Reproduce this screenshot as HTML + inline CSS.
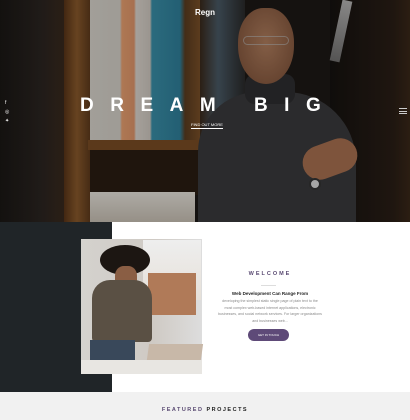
<!DOCTYPE html>
<html><head><style>
*{margin:0;padding:0;box-sizing:border-box}
body{width:410px;height:420px;overflow:hidden;font-family:"Liberation Sans",sans-serif;background:#fff;position:relative}
.a{position:absolute}
</style></head><body>
<div class="a" style="left:0;top:0;width:410px;height:222px;background:#1c1816;overflow:hidden">
 <div class="a" style="left:0;top:0;width:66px;height:222px;background:linear-gradient(90deg,#1a1715,#2a2420 60%,#3a2a1e)"></div>
 <div class="a" style="left:64px;top:0;width:26px;height:222px;background:linear-gradient(90deg,#5a3518,#8a5a2c,#5e3a1c)"></div>
 <div class="a" style="left:90px;top:0;width:110px;height:145px;background:linear-gradient(90deg,#d8d4cc 0,#d4d0c8 30px,#e8a070 32px,#e0966a 44px,#dcd6ce 46px,#cfc8c0 60px,#3a8fa8 62px,#2f7f9a 90px,#5a3c20 95px,#7a5028 110px)"></div>
 <div class="a" style="left:88px;top:140px;width:112px;height:10px;background:#7a4c24"></div>
 <div class="a" style="left:90px;top:150px;width:110px;height:45px;background:#2a1c12"></div>
 <div class="a" style="left:90px;top:192px;width:105px;height:30px;background:linear-gradient(180deg,#e8e4dc,#c8c0b4)"></div>
 <div class="a" style="left:200px;top:0;width:45px;height:150px;background:linear-gradient(90deg,#3a2a1c,#4a5a66 40%,#2a2a2a)"></div>
 <div class="a" style="left:330px;top:0;width:80px;height:222px;background:linear-gradient(90deg,#151210,#2a1e16 80%,#3a2818)"></div>
 <div class="a" style="left:336px;top:0;width:10px;height:62px;background:linear-gradient(180deg,#ddd,#888);transform:rotate(12deg);opacity:.8"></div>
 <div class="a" style="left:198px;top:92px;width:158px;height:140px;background:#3a3a3c;border-radius:60px 70px 0 0"></div>
 <div class="a" style="left:245px;top:74px;width:50px;height:30px;background:#2e2e30;border-radius:10px"></div>
 <div class="a" style="left:238px;top:8px;width:56px;height:76px;background:radial-gradient(ellipse at 50% 45%,#b07e5e,#7a4e36);border-radius:45% 45% 50% 50%"></div>
 <div class="a" style="left:243px;top:36px;width:46px;height:9px;border:1.5px solid #bbb;border-radius:5px;opacity:.6"></div>
 <div class="a" style="left:302px;top:142px;width:56px;height:34px;background:#a87050;border-radius:18px;transform:rotate(-20deg)"></div>
 <div class="a" style="left:309px;top:178px;width:12px;height:12px;background:#ddd;border:2px solid #333;border-radius:50%"></div>
 <div class="a" style="left:0;top:0;width:410px;height:222px;background:rgba(0,0,0,.25)"></div>
 <div class="a" style="left:0;top:8px;width:410px;text-align:center;color:#fff;font-size:8px;font-weight:bold">Regn</div>
 <div class="a" style="left:80px;top:95px;width:300px;color:#fff;font-size:19px;font-weight:bold;letter-spacing:16.5px;white-space:nowrap">DREAM BIG</div>
 <div class="a" style="left:191px;top:122px;color:#fff;font-size:4px;border-bottom:1px solid #fff;padding-bottom:1px">FIND OUT MORE</div>
 <div class="a" style="left:5px;top:99px;color:#fff;font-size:5px;line-height:9px">f<br>◎<br>✦</div>
 <div class="a" style="left:399px;top:108px;width:8px;height:6px;border-top:1px solid #ccc;border-bottom:1px solid #ccc"><div style="margin-top:2px;border-top:1px solid #ccc"></div></div>
</div>
<div class="a" style="left:0;top:222px;width:112px;height:170px;background:#202528"></div>
<div class="a" style="left:81px;top:239px;width:121px;height:135px;background:linear-gradient(90deg,#d4d2ce,#cfcac4 60%,#ddd)"></div>
<div class="a" style="left:143px;top:240px;width:58px;height:60px;background:linear-gradient(180deg,#eee,#e6e0d8)"></div>
<div class="a" style="left:148px;top:273px;width:48px;height:42px;background:#b07a58"></div>
<div class="a" style="left:100px;top:245px;width:50px;height:30px;background:#1c1612;border-radius:50%"></div>
<div class="a" style="left:115px;top:266px;width:22px;height:24px;background:#8a5e44;border-radius:40%"></div>
<div class="a" style="left:92px;top:280px;width:60px;height:62px;background:#5a5044;border-radius:18px 18px 4px 4px"></div>
<div class="a" style="left:90px;top:340px;width:45px;height:25px;background:#39485a"></div>
<div class="a" style="left:147px;top:344px;width:54px;height:30px;background:#c8b8a8;transform:skewX(-8deg)"></div>
<div class="a" style="left:81px;top:360px;width:121px;height:14px;background:#e8e6e2"></div>
<div class="a" style="left:210px;top:271px;width:120px;text-align:center;color:#5a4a72;font-size:5.5px;font-weight:bold;letter-spacing:2px">WELCOME</div>
<div class="a" style="left:261px;top:285px;width:15px;border-top:1px solid #ddd"></div>
<div class="a" style="left:210px;top:291px;width:120px;text-align:center;color:#222;font-size:4.5px;font-weight:bold">Web Development Can Range From</div>
<div class="a" style="left:218px;top:298px;width:104px;text-align:center;color:#888;font-size:3.6px;line-height:6.5px">developing the simplest static single page of plain text to the most complex web-based internet applications, electronic businesses, and social network services. For larger organizations and businesses web...</div>
<div class="a" style="left:248px;top:329px;width:41px;height:12px;background:#5e4a78;border-radius:6px;color:#fff;font-size:3px;text-align:center;line-height:12px">GET IN TOUCH</div>
<div class="a" style="left:0;top:392px;width:410px;height:28px;background:#f1f1f1"></div>
<div class="a" style="left:0;top:407px;width:410px;text-align:center;font-size:5.5px;font-weight:bold;letter-spacing:1.5px"><span style="color:#5a4a72">FEATURED</span> <span style="color:#222">PROJECTS</span></div>
</body></html>
